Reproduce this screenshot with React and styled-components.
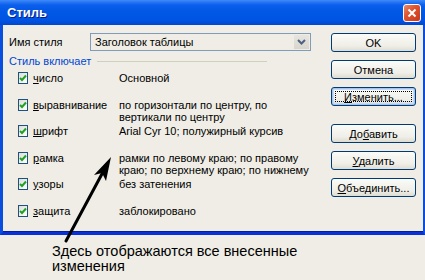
import React from "react";
import styled, { createGlobalStyle } from "styled-components";

const Global = createGlobalStyle`
  html, body {
    margin: 0;
    padding: 0;
    background: #efede5;
  }
  body {
    font-family: "Liberation Sans", Arial, sans-serif;
    font-size: 11px;
    color: #000;
  }
`;

const Page = styled.div`
  position: relative;
  width: 425px;
  height: 280px;
  overflow: hidden;
  background: #efede5;
`;

const Window = styled.div`
  width: 425px;
  box-sizing: border-box;
  border-left: 3px solid #0a4ee0;
  border-right: 2px solid #0a4ee0;
  border-bottom: 3px solid #0831d9;
  box-shadow: inset 0 -1px 0 #001ea0;
  background: #efede5;
`;

const TitleBar = styled.div`
  height: 25px;
  margin: 0 -2px 0 -3px;
  padding: 0 4px 0 7px;
  display: flex;
  align-items: center;
  justify-content: space-between;
  background: linear-gradient(
    #3d8af7 0,
    #2a78f5 2px,
    #0a5eea 5px,
    #0058e6 12px,
    #0054e3 20px,
    #0046d0 25px
  );
`;

const Title = styled.span`
  color: #fff;
  font-weight: bold;
  font-size: 13px;
  text-shadow: 1px 1px 0 #0a1e8a;
`;

const CloseBtn = styled.div`
  width: 18px;
  height: 18px;
  box-sizing: border-box;
  border: 1px solid #fff;
  border-radius: 3px;
  background: linear-gradient(135deg, #e98b6d 0, #e0542f 40%, #c9371a 100%);
  display: flex;
  align-items: center;
  justify-content: center;
`;

const Body = styled.div`
  height: 207px;
  display: flex;
`;

const Main = styled.div`
  width: 328px;
  padding: 8px 0 0 6px;
  box-sizing: border-box;
`;

const NameRow = styled.div`
  display: flex;
  align-items: center;
  height: 18px;
`;

const Label = styled.span`
  width: 81px;
`;

const Select = styled.div`
  width: 221px;
  height: 18px;
  box-sizing: border-box;
  border: 1px solid #7f9db9;
  background: #efede5;
  display: flex;
  align-items: center;
  justify-content: space-between;
  padding: 0 1px 0 4px;
`;

const DropBtn = styled.div`
  width: 15px;
  height: 14px;
  background: linear-gradient(#e6e5df, #d8d6cc);
  display: flex;
  align-items: center;
  justify-content: center;
`;

const GroupHead = styled.div`
  width: 258px;
  margin-top: 4px;
  display: flex;
  align-items: center;
  height: 12px;
  color: #0046d5;
`;

const Rule = styled.div`
  flex: 1;
  height: 1px;
  margin: 1px 0 0 6px;
  background: #d0d0bf;
`;

const List = styled.div`
  padding-left: 9px;
`;

const Row = styled.div`
  height: 26.5px;
  box-sizing: border-box;
  padding-top: 5px;
  display: grid;
  grid-template-columns: 15px 86px auto;
  align-items: start;
  line-height: 12px;
`;

const Check = styled.div`
  width: 10px;
  height: 12px;
  box-sizing: border-box;
  border: 1px solid #1c5180;
  background: linear-gradient(135deg, #dcdcd7, #fff);
  display: flex;
  align-items: center;
  justify-content: center;
`;

const Key = styled.span`
  text-decoration: underline;
`;

const Value = styled.span`
  white-space: nowrap;
`;

const Buttons = styled.div`
  width: 85px;
  padding-top: 8px;
  display: flex;
  flex-direction: column;
  gap: 8px;
`;

const Button = styled.div`
  height: 19px;
  box-sizing: border-box;
  border: 1px solid #003c74;
  border-radius: 3px;
  background: linear-gradient(#fbfbf8, #efeee7 70%, #dedcd2);
  display: flex;
  align-items: center;
  justify-content: center;
  margin-top: ${(p) => (p.$gapAbove ? "10px" : "0")};
  position: relative;
  box-shadow: ${(p) =>
    p.$focused ? "inset 0 0 0 1px #a6c4f1, inset 0 0 0 2px #c6dbf7" : "none"};

  &::after {
    content: "";
    display: ${(p) => (p.$focused ? "block" : "none")};
    position: absolute;
    inset: 3px;
    border: 1px dotted #000;
  }
`;

const Caption = styled.div`
  margin: 9px 0 0 52px;
  font-size: 14.5px;
  line-height: 15px;
`;

const Overlay = styled.svg`
  position: absolute;
  left: 0;
  top: 0;
  pointer-events: none;
`;

const rows = [
  { k: "ч", rest: "исло", value: ["Основной"] },
  { k: "в", rest: "ыравнивание", value: ["по горизонтали по центру, по", "вертикали по центру"] },
  { k: "ш", rest: "рифт", value: ["Arial Cyr 10; полужирный курсив"] },
  { k: "р", rest: "амка", value: ["рамки по левому краю; по правому", "краю; по верхнему краю; по нижнему"] },
  { k: "у", rest: "зоры", value: ["без затенения"] },
  { k: "з", rest: "ащита", value: ["заблокировано"] },
];

const buttons = [
  { pre: "", k: "", post: "OK" },
  { pre: "", k: "", post: "Отмена" },
  { pre: "", k: "И", post: "зменить...", focused: true },
  { pre: "До", k: "б", post: "авить", gap: true },
  { pre: "", k: "У", post: "далить" },
  { pre: "", k: "О", post: "бъединить..." },
];

export default function App() {
  return (
    <Page>
      <Global />
      <Window>
        <TitleBar>
          <Title>Стиль</Title>
          <CloseBtn>
            <svg width="10" height="10" viewBox="0 0 10 10">
              <path d="M1.5 1.5 L8.5 8.5 M8.5 1.5 L1.5 8.5" stroke="#fff" strokeWidth="2" />
            </svg>
          </CloseBtn>
        </TitleBar>
        <Body>
          <Main>
            <NameRow>
              <Label>Имя стиля</Label>
              <Select>
                <span>Заголовок таблицы</span>
                <DropBtn>
                  <svg width="9" height="6" viewBox="0 0 9 6">
                    <path d="M1 1 L4.5 4.5 L8 1" fill="none" stroke="#4d6185" strokeWidth="2" />
                  </svg>
                </DropBtn>
              </Select>
            </NameRow>
            <GroupHead>
              Стиль включает
              <Rule />
            </GroupHead>
            <List>
              {rows.map((r) => (
                <Row key={r.rest}>
                  <Check>
                    <svg width="8" height="8" viewBox="0 0 8 8">
                      <path d="M1 4 L3 6 L7 1.5" fill="none" stroke="#21a121" strokeWidth="2" />
                    </svg>
                  </Check>
                  <span>
                    <Key>{r.k}</Key>
                    {r.rest}
                  </span>
                  <Value>
                    {r.value.map((line, i) => (
                      <React.Fragment key={i}>
                        {i > 0 && <br />}
                        {line}
                      </React.Fragment>
                    ))}
                  </Value>
                </Row>
              ))}
            </List>
          </Main>
          <Buttons>
            {buttons.map((b) => (
              <Button key={b.post} $focused={b.focused} $gapAbove={b.gap}>
                <span>
                  {b.pre}
                  {b.k && <Key>{b.k}</Key>}
                  {b.post}
                </span>
              </Button>
            ))}
          </Buttons>
        </Body>
      </Window>
      <Caption>
        Здесь отображаются все внесенные
        <br />
        изменения
      </Caption>
      <Overlay width="425" height="280" viewBox="0 0 425 280">
        <path d="M66 241 L103 172" stroke="#000" strokeWidth="3" strokeLinecap="round" />
        <polygon points="111,157 94,175 102,173 106,181" fill="#000" />
      </Overlay>
    </Page>
  );
}
